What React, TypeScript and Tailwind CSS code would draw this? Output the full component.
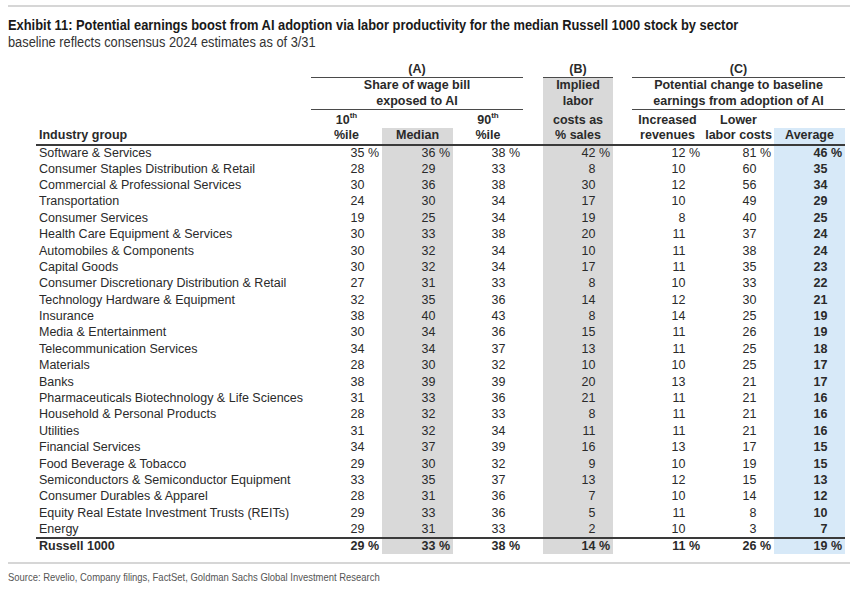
type Row = { name: string; v: number[]; pct?: boolean; total?: boolean };

const ROWS: Row[] = [
  { name: "Software & Services", v: [35, 36, 38, 42, 12, 81, 46], pct: true },
  { name: "Consumer Staples Distribution & Retail", v: [28, 29, 33, 8, 10, 60, 35] },
  { name: "Commercial & Professional Services", v: [30, 36, 38, 30, 12, 56, 34] },
  { name: "Transportation", v: [24, 30, 34, 17, 10, 49, 29] },
  { name: "Consumer Services", v: [19, 25, 34, 19, 8, 40, 25] },
  { name: "Health Care Equipment & Services", v: [30, 33, 38, 20, 11, 37, 24] },
  { name: "Automobiles & Components", v: [30, 32, 34, 10, 11, 38, 24] },
  { name: "Capital Goods", v: [30, 32, 34, 17, 11, 35, 23] },
  { name: "Consumer Discretionary Distribution & Retail", v: [27, 31, 33, 8, 10, 33, 22] },
  { name: "Technology Hardware & Equipment", v: [32, 35, 36, 14, 12, 30, 21] },
  { name: "Insurance", v: [38, 40, 43, 8, 14, 25, 19] },
  { name: "Media & Entertainment", v: [30, 34, 36, 15, 11, 26, 19] },
  { name: "Telecommunication Services", v: [34, 34, 37, 13, 11, 25, 18] },
  { name: "Materials", v: [28, 30, 32, 10, 10, 25, 17] },
  { name: "Banks", v: [38, 39, 39, 20, 13, 21, 17] },
  { name: "Pharmaceuticals Biotechnology & Life Sciences", v: [31, 33, 36, 21, 11, 21, 16] },
  { name: "Household & Personal Products", v: [28, 32, 33, 8, 11, 21, 16] },
  { name: "Utilities", v: [31, 32, 34, 11, 11, 21, 16] },
  { name: "Financial Services", v: [34, 37, 39, 16, 13, 17, 15] },
  { name: "Food Beverage & Tobacco", v: [29, 30, 32, 9, 10, 19, 15] },
  { name: "Semiconductors & Semiconductor Equipment", v: [33, 35, 37, 13, 12, 15, 13] },
  { name: "Consumer Durables & Apparel", v: [28, 31, 36, 7, 10, 14, 12] },
  { name: "Equity Real Estate Investment Trusts (REITs)", v: [29, 33, 36, 5, 11, 8, 10] },
  { name: "Energy", v: [29, 31, 33, 2, 10, 3, 7] },
];

const TOTAL: Row = { name: "Russell 1000", v: [29, 33, 38, 14, 11, 26, 19], pct: true, total: true };

const GRAY = "bg-[#d9d9d9]";
const BLUE = "bg-[#d7e9f8]";
// no narrow font installed, so squeeze Liberation Sans horizontally
const NARROW = "font-['Liberation_Sans',Arial,sans-serif] origin-left whitespace-nowrap";

function Num({ value, pct }: { value: number; pct?: boolean }) {
  return (
    <>
      {value}
      <span className={pct ? "" : "invisible"}>&nbsp;%</span>
    </>
  );
}

function Th({ children }: { children: React.ReactNode }) {
  return <span className="relative -top-[5px] text-[8px]">{children}</span>;
}

function Center({ children }: { children?: React.ReactNode }) {
  return <div className="flex justify-center whitespace-nowrap">{children}</div>;
}

function BodyRow({ row }: { row: Row }) {
  const [p10, med, p90, b, inc, low, avg] = row.v;
  const cell = "pr-[3px] text-right";
  const top = row.total ? "border-t-2 border-[#3a3a3a]" : "";
  return (
    <tr className={row.total ? "h-[16px] font-bold" : "h-[16.4px]"}>
      <td className={`whitespace-nowrap pl-[3px] ${top}`}>{row.name}</td>
      <td className={`${cell} ${top}`}><Num value={p10} pct={row.pct} /></td>
      <td className={`${cell} ${GRAY} ${top}`}><Num value={med} pct={row.pct} /></td>
      <td className={`${cell} ${top}`}><Num value={p90} pct={row.pct} /></td>
      <td className={top} />
      <td className={`${cell} ${GRAY} ${top}`}><Num value={b} pct={row.pct} /></td>
      <td className={top} />
      <td className={`${cell} ${top}`}><Num value={inc} pct={row.pct} /></td>
      <td className={`${cell} ${top}`}><Num value={low} pct={row.pct} /></td>
      <td className={`${cell} ${BLUE} font-bold ${top}`}><Num value={avg} pct={row.pct} /></td>
    </tr>
  );
}

export default function App() {
  const line = "border-b border-[#4a4a4a]";
  const dbl = "border-b-2 border-[#3a3a3a] align-bottom pb-[1px]";
  return (
    <div className="flex h-[592px] w-[850px] flex-col overflow-hidden bg-white font-['Liberation_Sans',Arial,sans-serif] text-[#2a2a2a]">
      <div className="ml-[8px] mt-[5px] h-[2px] bg-[#d6d6d6]" />
      <div className={`ml-[8px] mt-[10px] h-[16px] scale-x-[0.92] text-[14px] font-bold leading-[16px] text-[#1a1a1a] ${NARROW}`}>
        Exhibit 11: Potential earnings boost from AI adoption via labor productivity for the median Russell 1000 stock by sector
      </div>
      <div className={`ml-[8px] mt-[1px] h-[16px] scale-x-[0.915] text-[14px] leading-[16px] text-[#333] ${NARROW}`}>
        baseline reflects consensus 2024 estimates as of 3/31
      </div>

      <table className="ml-[36px] mt-[12px] w-[809px] table-fixed text-[12.5px] leading-[15px]">
        <colgroup>
          <col className="w-[275px]" />
          <col className="w-[71px]" />
          <col className="w-[71px]" />
          <col className="w-[70px]" />
          <col className="w-[20px]" />
          <col className="w-[70px]" />
          <col className="w-[19px]" />
          <col className="w-[71px]" />
          <col className="w-[71px]" />
          <col className="w-[71px]" />
        </colgroup>
        <thead className="font-bold">
          <tr className="h-[14px]">
            <th />
            <th colSpan={3} className={line}><Center>(A)</Center></th>
            <th />
            <th className={line}><Center>(B)</Center></th>
            <th />
            <th colSpan={3} className={line}><Center>(C)</Center></th>
          </tr>
          <tr className="h-[16px]">
            <th />
            <th colSpan={3}><Center>Share of wage bill</Center></th>
            <th />
            <th className={GRAY}><Center>Implied</Center></th>
            <th />
            <th colSpan={3}><Center>Potential change to baseline</Center></th>
          </tr>
          <tr className="h-[16px]">
            <th />
            <th colSpan={3} className={line}><Center>exposed to AI</Center></th>
            <th />
            <th className={GRAY}><Center>labor</Center></th>
            <th />
            <th colSpan={3} className={line}><Center>earnings from adoption of AI</Center></th>
          </tr>
          <tr className="h-[18px]">
            <th />
            <th className="align-bottom"><Center>10<Th>th</Th></Center></th>
            <th />
            <th className="align-bottom"><Center>90<Th>th</Th></Center></th>
            <th />
            <th className={`${GRAY} align-bottom`}><Center>costs as</Center></th>
            <th />
            <th className="align-bottom"><Center>Increased</Center></th>
            <th className="align-bottom"><Center>Lower</Center></th>
            <th />
          </tr>
          <tr className="h-[17px]">
            <th className={`${dbl} pl-[3px] text-left`}>Industry group</th>
            <th className={dbl}><Center>%ile</Center></th>
            <th className={`${dbl} ${GRAY}`}><Center>Median</Center></th>
            <th className={dbl}><Center>%ile</Center></th>
            <th className={dbl} />
            <th className={`${dbl} ${GRAY}`}><Center>% sales</Center></th>
            <th className={dbl} />
            <th className={dbl}><Center>revenues</Center></th>
            <th className={dbl}><Center>labor costs</Center></th>
            <th className={`${dbl} ${BLUE}`}><Center>Average</Center></th>
          </tr>
        </thead>
        <tbody>
          {ROWS.map((r) => (
            <BodyRow key={r.name} row={r} />
          ))}
          <BodyRow row={TOTAL} />
        </tbody>
      </table>

      <div className="ml-[8px] mt-[8px] h-[2px] bg-[#d6d6d6]" />
      <div className={`ml-[8px] mt-[6px] scale-x-[0.86] text-[11px] leading-[14px] text-[#555] ${NARROW}`}>
        Source: Revelio, Company filings, FactSet, Goldman Sachs Global Investment Research
      </div>
    </div>
  );
}
